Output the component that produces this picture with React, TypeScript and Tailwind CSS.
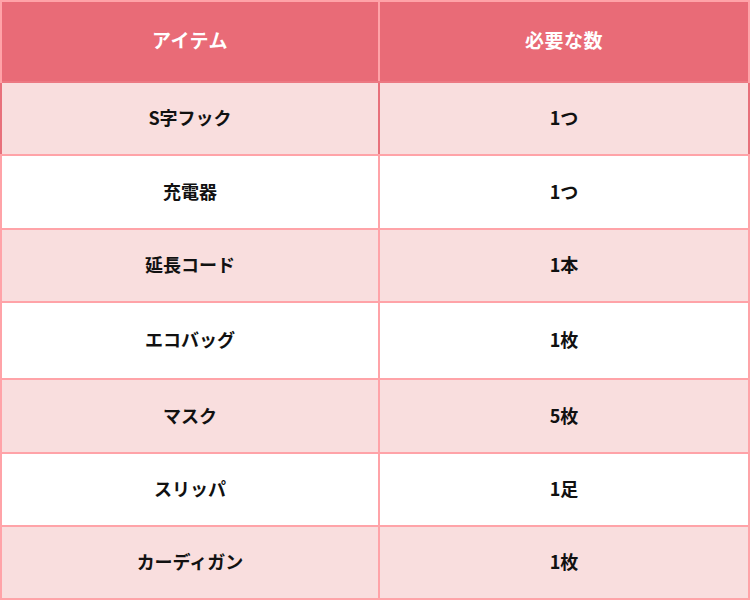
const rows = [
  { item: 'S字フック', count: '1つ', h: 'h-[73px]' },
  { item: '充電器', count: '1つ', h: 'h-[74px]' },
  { item: '延長コード', count: '1本', h: 'h-[73px]' },
  { item: 'エコバッグ', count: '1枚', h: 'h-[77px]' },
  { item: 'マスク', count: '5枚', h: 'h-[74px]' },
  { item: 'スリッパ', count: '1足', h: 'h-[73px]' },
  { item: 'カーディガン', count: '1枚', h: 'h-[73px]' },
];

export default function App() {
  return (
    <div className="w-[750px] h-[600px] bg-white font-['Noto_Sans_CJK_JP','Noto_Sans',sans-serif] font-bold">
      <div className="border-2 border-b-0 border-[#ffa3a8]">
        {/* header */}
        <div className="grid grid-cols-[378px_368px] h-[81px] bg-[#e96b77] text-white text-[19px] tracking-[0.5px] border-b-2 border-[#ec7882]">
          <div className="flex items-center justify-center border-r-2 border-[#ffa3a8] pb-[2px]">アイテム</div>
          <div className="flex items-center justify-center pb-[2px]">必要な数</div>
        </div>

        {rows.map((r, i) => {
          const first = i === 0;
          return (
            <div
              key={r.item}
              className={`grid grid-cols-[378px_368px] text-[18px] text-[#111] border-b-2 border-b-[#ffa3a8] ${r.h} ${
                i % 2 === 0 ? 'bg-[#f9dede]' : 'bg-white'
              } ${first ? '-mx-[2px] w-[750px] grid-cols-[380px_370px]' : ''}`}
            >
              <div
                className={`flex items-center justify-center pb-[2px] border-r-2 ${
                  first ? 'border-l-2 border-[#e8707b]' : 'border-[#ffa3a8]'
                }`}
              >
                {r.item}
              </div>
              <div
                className={`flex items-center justify-center pb-[2px] ${first ? 'border-r-2 border-[#e8707b]' : ''}`}
              >
                {r.count}
              </div>
            </div>
          );
        })}
      </div>
    </div>
  );
}
